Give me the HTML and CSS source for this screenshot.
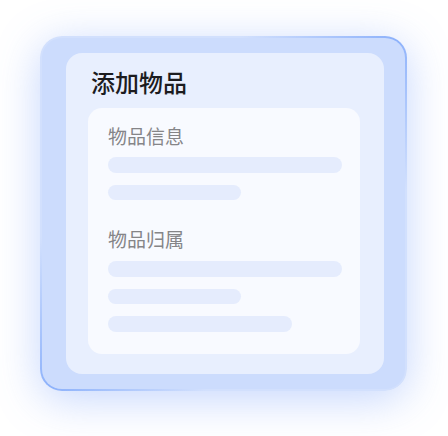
FILE: index.html
```html
<!DOCTYPE html>
<html lang="zh">
<head>
<meta charset="utf-8">
<link rel="stylesheet" href="styles.css">
</head>
<body>
<div class="stage">
  <div class="card">
    <div class="panel">
      <div class="title">添加物品</div>
      <div class="sheet">
        <div class="label">物品信息</div>
        <div class="bar bar-long"></div>
        <div class="bar bar-short"></div>
        <div class="label label-2">物品归属</div>
        <div class="bar bar-long"></div>
        <div class="bar bar-short"></div>
        <div class="bar bar-mid"></div>
      </div>
    </div>
  </div>
</div>
</body>
</html>
```
FILE: styles.css
```css
html, body {
  margin: 0;
  background: #ffffff;
}
body {
  font-family: "Noto Sans CJK SC", "Noto Sans", sans-serif;
}
.stage {
  width: 448px;
  height: 436px;
  box-sizing: border-box;
  padding: 36px 0 0 40px;
  overflow: hidden;
}
.card {
  width: 367px;
  height: 355px;
  box-sizing: border-box;
  border: 2px solid transparent;
  border-radius: 22px;
  background:
    linear-gradient(#ccdcfd, #ccdcfd) padding-box,
    linear-gradient(135deg, #d2e0fd 28%, #8cb1fb 50%, #d2e0fd 72%) border-box;
  box-shadow: 0 8px 44px rgba(95, 140, 250, 0.36);
  padding: 15px 21px 15px 24px;
  display: flex;
  flex-direction: column;
}
.panel {
  flex: 1;
  background: #e8effe;
  border-radius: 16px;
  padding: 17px 24px 20px 22px;
  display: flex;
  flex-direction: column;
}
.title {
  font-size: 24px;
  line-height: 24px;
  font-weight: 500;
  color: #1c1c1f;
  margin-left: 3px;
}
.sheet {
  flex: 1;
  margin-top: 14px;
  background: #f8faff;
  border-radius: 14px;
  padding: 18px 18px 0 20px;
}
.label {
  font-size: 19px;
  line-height: 19px;
  color: #858588;
  margin-bottom: 12px;
}
.label-2 {
  margin-top: 29px;
  margin-bottom: 13px;
}
.bar {
  height: 15.5px;
  border-radius: 8px;
  background: #e5ecfd;
}
.bar + .bar {
  margin-top: 12px;
}
.bar-long { width: 234px; }
.bar-short { width: 133px; }
.bar-mid { width: 184px; }
```
